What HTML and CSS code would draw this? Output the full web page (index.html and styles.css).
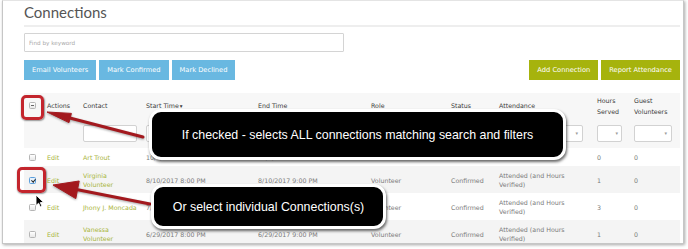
FILE: index.html
```html
<!doctype html>
<html lang="en">
  <head>
    <meta charset="UTF-8" />
    <meta name="viewport" content="width=device-width, initial-scale=1.0" />
    <title>Connections</title>
    <link rel="stylesheet" href="styles.css">
  </head>
  <body>
    <div class="shot">
      <h1 class="title">Connections</h1>
      <input class="search" type="text" placeholder="Find by keyword" />

      <div class="toolbar">
        <div class="btn-group">
          <button class="btn btn-blue">Email Volunteers</button>
          <button class="btn btn-blue">Mark Confirmed</button>
          <button class="btn btn-blue">Mark Declined</button>
        </div>
        <div class="btn-group">
          <button class="btn btn-green">Add Connection</button>
          <button class="btn btn-green">Report Attendance</button>
        </div>
      </div>

      <div class="table">
        <div class="row head">
          <div class="cell"><span class="check partial"></span></div>
          <div class="cell">Actions</div>
          <div class="cell">Contact</div>
          <div class="cell">Start Time<span class="sort">▾</span></div>
          <div class="cell">End Time</div>
          <div class="cell">Role</div>
          <div class="cell">Status</div>
          <div class="cell">Attendance</div>
          <div class="cell">Hours<br />Served</div>
          <div class="cell">Guest<br />Volunteers</div>
        </div>

        <div class="row filters">
          <div class="cell"></div>
          <div class="cell"></div>
          <div class="cell"><span class="field f-contact"></span></div>
          <div class="cell"><span class="field f-date"></span></div>
          <div class="cell"><span class="field f-date"></span></div>
          <div class="cell"><span class="field f-role"><span class="caret">▾</span></span></div>
          <div class="cell"><span class="field f-status"><span class="caret">▾</span></span></div>
          <div class="cell"><span class="field f-attend"><span class="caret">▾</span></span></div>
          <div class="cell"><span class="field f-hours"><span class="caret">▾</span></span></div>
          <div class="cell"><span class="field f-guest"><span class="caret">▾</span></span></div>
        </div>

        <div class="row">
          <div class="cell"><span class="check"></span></div>
          <div class="cell link">Edit</div>
          <div class="cell link">Art Trout</div>
          <div class="cell">10/5/2017 8:00 PM</div>
          <div class="cell">10/5/2017 9:00 PM</div>
          <div class="cell">Volunteer</div>
          <div class="cell">Confirmed</div>
          <div class="cell"></div>
          <div class="cell">0</div>
          <div class="cell">0</div>
        </div>

        <div class="row alt">
          <div class="cell"><span class="check checked"></span></div>
          <div class="cell link">Edit</div>
          <div class="cell link">Virginia<br />Volunteer</div>
          <div class="cell">8/10/2017 8:00 PM</div>
          <div class="cell">8/10/2017 9:00 PM</div>
          <div class="cell">Volunteer</div>
          <div class="cell">Confirmed</div>
          <div class="cell">Attended (and Hours<br />Verified)</div>
          <div class="cell">1</div>
          <div class="cell">0</div>
        </div>

        <div class="row">
          <div class="cell"><span class="check"></span></div>
          <div class="cell link">Edit</div>
          <div class="cell link">Jhony J. Moncada</div>
          <div class="cell">7/20/2017 8:00 PM</div>
          <div class="cell">7/20/2017 9:00 PM</div>
          <div class="cell">Volunteer</div>
          <div class="cell">Confirmed</div>
          <div class="cell">Attended (and Hours<br />Verified)</div>
          <div class="cell">3</div>
          <div class="cell">0</div>
        </div>

        <div class="row alt">
          <div class="cell"><span class="check"></span></div>
          <div class="cell link">Edit</div>
          <div class="cell link">Vanessa<br />Volunteer</div>
          <div class="cell">6/29/2017 8:00 PM</div>
          <div class="cell">6/29/2017 9:00 PM</div>
          <div class="cell">Volunteer</div>
          <div class="cell">Confirmed</div>
          <div class="cell">Attended (and Hours<br />Verified)</div>
          <div class="cell">1</div>
          <div class="cell">0</div>
        </div>
      </div>
    </div>

    <!-- annotations drawn over the screenshot -->
    <svg class="arrows" width="688" height="249" viewBox="0 0 688 249">
      <g fill="#a3191e" stroke="#a3191e">
        <line x1="143" y1="137" x2="66" y2="117" stroke-width="3" stroke-linecap="round" />
        <polygon points="47,112 71.4,113.4 69,122.6" stroke-width="1" stroke-linejoin="round" />
        <line x1="150" y1="204" x2="74" y2="189" stroke-width="3" stroke-linecap="round" />
        <polygon points="53,185 79.2,181 75.8,198.6" stroke-width="1" stroke-linejoin="round" />
      </g>
    </svg>

    <div class="mark mark-all"></div>
    <div class="mark mark-one"></div>

    <div class="callout callout-all">If checked - selects ALL connections matching search and filters</div>
    <div class="callout callout-one">Or select individual Connections(s)</div>

    <svg class="cursor" width="10" height="14" viewBox="0 0 10 14">
      <path d="M1 1 L1 11.5 L3.6 9.2 L5.4 13 L7 12.3 L5.3 8.6 L8.6 8.4 Z" fill="#000" stroke="#fff" stroke-width="0.9" stroke-linejoin="round" />
    </svg>
  </body>
</html>
```

FILE: styles.css
```css
* {
  margin: 0;
  padding: 0;
  box-sizing: border-box;
}

body {
  position: relative;
  width: 688px;
  height: 249px;
  overflow: hidden;
  background: #fff;
  font-family: "DejaVu Sans", Verdana, sans-serif;
  color: #7a7a7a;
}

.shot {
  margin-left: 2px;
  width: 682px;
  height: 244px;
  padding: 0 3px 0 21px;
  border: 1px solid #c6c6c6;
  border-top-color: #e4e4e4;
  box-shadow: 1px 1px 3px rgba(0, 0, 0, 0.35);
  overflow: hidden;
}

.title {
  padding: 1px 0 3px;
  font-family: Lato, "Open Sans", sans-serif;
  font-size: 15px;
  line-height: 20px;
  font-weight: 400;
  color: #555;
  border-bottom: 2px solid #eeeeee;
}

.search {
  display: block;
  width: 320px;
  height: 19px;
  margin-top: 6px;
  padding-left: 4px;
  border: 1px solid #d4d4d4;
  border-radius: 1px;
  font-family: inherit;
  font-size: 5.7px;
  outline: none;
}

.search::placeholder {
  color: #aaa;
}

.toolbar {
  display: flex;
  justify-content: space-between;
  margin-top: 8px;
}

.btn-group {
  display: flex;
  gap: 3px;
}

.btn {
  height: 20px;
  padding: 0 8px;
  border: none;
  color: #fff;
  font-family: inherit;
  font-size: 6.7px;
}

.btn-blue {
  background: #69b8e1;
}

.btn-green {
  background: #a6b30d;
}

.table {
  margin-top: 13px;
  font-size: 6.3px;
  line-height: 9px;
}

.row {
  display: grid;
  grid-template-columns: 18px 36px 63px 112px 113px 80px 48px 98px 37px 51px;
  align-items: center;
  padding: 5px 0 4px;
}

.row.alt {
  background: #f4f4f4;
}

.row.head,
.row.filters {
  background: #f7f7f7;
}

.row.head {
  height: 25px;
  padding: 0;
  color: #3a3a3a;
  line-height: 11px;
}

.row.filters {
  height: 30px;
  padding: 7px 0 6px;
}

.cell {
  padding-left: 5px;
  white-space: nowrap;
}

.link {
  color: #a8b43a;
}

.sort {
  font-size: 5.5px;
  margin-left: 1px;
}

.check {
  display: block;
  position: relative;
  width: 7px;
  height: 7px;
  border: 1px solid #b5b5b5;
  border-radius: 1.5px;
  background: linear-gradient(#fff, #e8e8e8);
}

.check.partial:after {
  content: "";
  position: absolute;
  left: 1px;
  top: 2px;
  width: 3px;
  height: 1px;
  background: #666;
}

.check.checked {
  border-color: #5d9fdc;
  background: #e6f1fb;
}

.check.checked:after {
  content: "";
  position: absolute;
  left: 1.5px;
  top: 0;
  width: 1.5px;
  height: 3px;
  border-right: 1px solid #222;
  border-bottom: 1px solid #222;
  transform: rotate(40deg);
}

.field {
  display: flex;
  align-items: center;
  justify-content: flex-end;
  height: 17px;
  padding-right: 4px;
  border: 1px solid #d2d2d2;
  border-radius: 2px;
  background: #fff;
}

.caret {
  font-size: 5px;
  color: #999;
}

.f-contact { width: 54px; }
.f-date { width: 100px; }
.f-role { width: 70px; }
.f-status { width: 40px; }
.f-attend { width: 84px; }
.f-hours { width: 25px; padding-right: 3px; }
.f-guest { width: 38px; }

.arrows {
  position: absolute;
  left: 0;
  top: 0;
  filter: drop-shadow(0.5px 1px 0.8px rgba(0, 0, 0, 0.35));
}

.mark {
  position: absolute;
  border: 3px solid #c3252d;
  border-radius: 5px;
  box-shadow: 0.5px 1px 1.5px rgba(0, 0, 0, 0.4);
}

.mark-all {
  left: 21px;
  top: 95px;
  width: 23px;
  height: 25px;
}

.mark-one {
  left: 17px;
  top: 167px;
  width: 29px;
  height: 26px;
}

.callout {
  position: absolute;
  display: flex;
  align-items: center;
  justify-content: center;
  background: #000;
  border: 3px solid #fff;
  border-radius: 12px;
  box-shadow: 1px 2px 3px rgba(0, 0, 0, 0.6);
  color: #fff;
  font-family: "Liberation Sans", Arial, sans-serif;
  font-size: 12.4px;
}

.callout-all {
  left: 149px;
  top: 109px;
  width: 417px;
  height: 51px;
}

.callout-one {
  left: 151px;
  top: 184px;
  width: 235px;
  height: 45px;
}

.cursor {
  position: absolute;
  left: 35px;
  top: 194px;
}
```
